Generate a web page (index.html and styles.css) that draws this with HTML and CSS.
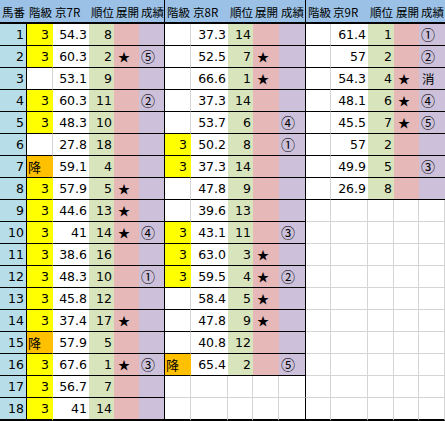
FILE: index.html
```html
<!DOCTYPE html>
<html lang="ja">
<head>
  <meta charset="UTF-8" />
  <title>京 成績表</title>
  <link rel="stylesheet" href="styles.css">
</head>
<body>
  <div class="sheet">
    <!-- header -->
    <div class="row head">
      <span>馬番</span><span>階級</span><span>京7R</span><span>順位</span><span>展開</span><span class="end">成績</span>
      <span>階級</span><span>京8R</span><span>順位</span><span>展開</span><span class="end">成績</span>
      <span>階級</span><span>京9R</span><span>順位</span><span>展開</span><span>成績</span>
    </div>

    <div class="row">
      <span class="no">1</span><span class="cls y">3</span><span class="time">54.3</span><span class="rank">8</span><span class="dev"></span><span class="res end"></span>
      <span class="cls"></span><span class="time">37.3</span><span class="rank">14</span><span class="dev"></span><span class="res end"></span>
      <span class="cls"></span><span class="time">61.4</span><span class="rank">1</span><span class="dev"></span><span class="res">①</span>
    </div>
    <div class="row">
      <span class="no">2</span><span class="cls y">3</span><span class="time">60.3</span><span class="rank">2</span><span class="dev">★</span><span class="res end">⑤</span>
      <span class="cls"></span><span class="time">52.5</span><span class="rank">7</span><span class="dev">★</span><span class="res end"></span>
      <span class="cls"></span><span class="time">57</span><span class="rank">2</span><span class="dev"></span><span class="res">②</span>
    </div>
    <div class="row">
      <span class="no">3</span><span class="cls"></span><span class="time">53.1</span><span class="rank">9</span><span class="dev"></span><span class="res end"></span>
      <span class="cls"></span><span class="time">66.6</span><span class="rank">1</span><span class="dev">★</span><span class="res end"></span>
      <span class="cls"></span><span class="time">54.3</span><span class="rank">4</span><span class="dev">★</span><span class="res kanji">消</span>
    </div>
    <div class="row">
      <span class="no">4</span><span class="cls y">3</span><span class="time">60.3</span><span class="rank">11</span><span class="dev"></span><span class="res end">②</span>
      <span class="cls"></span><span class="time">37.3</span><span class="rank">14</span><span class="dev"></span><span class="res end"></span>
      <span class="cls"></span><span class="time">48.1</span><span class="rank">6</span><span class="dev">★</span><span class="res">④</span>
    </div>
    <div class="row">
      <span class="no">5</span><span class="cls y">3</span><span class="time">48.3</span><span class="rank">10</span><span class="dev"></span><span class="res end"></span>
      <span class="cls"></span><span class="time">53.7</span><span class="rank">6</span><span class="dev"></span><span class="res end">④</span>
      <span class="cls"></span><span class="time">45.5</span><span class="rank">7</span><span class="dev">★</span><span class="res">⑤</span>
    </div>
    <div class="row">
      <span class="no">6</span><span class="cls"></span><span class="time">27.8</span><span class="rank">18</span><span class="dev"></span><span class="res end"></span>
      <span class="cls y">3</span><span class="time">50.2</span><span class="rank">8</span><span class="dev"></span><span class="res end">①</span>
      <span class="cls"></span><span class="time">57</span><span class="rank">2</span><span class="dev"></span><span class="res"></span>
    </div>
    <div class="row">
      <span class="no">7</span><span class="cls o">降</span><span class="time">59.1</span><span class="rank">4</span><span class="dev"></span><span class="res end"></span>
      <span class="cls y">3</span><span class="time">37.3</span><span class="rank">14</span><span class="dev"></span><span class="res end"></span>
      <span class="cls"></span><span class="time">49.9</span><span class="rank">5</span><span class="dev"></span><span class="res">③</span>
    </div>
    <div class="row">
      <span class="no">8</span><span class="cls y">3</span><span class="time">57.9</span><span class="rank">5</span><span class="dev">★</span><span class="res end"></span>
      <span class="cls"></span><span class="time">47.8</span><span class="rank">9</span><span class="dev"></span><span class="res end"></span>
      <span class="cls"></span><span class="time">26.9</span><span class="rank">8</span><span class="dev"></span><span class="res"></span>
    </div>
    <div class="row">
      <span class="no">9</span><span class="cls y">3</span><span class="time">44.6</span><span class="rank">13</span><span class="dev">★</span><span class="res end"></span>
      <span class="cls"></span><span class="time">39.6</span><span class="rank">13</span><span class="dev"></span><span class="res end"></span>
      <span class="empty"></span><span class="empty"></span><span class="empty"></span><span class="empty"></span><span class="empty"></span>
    </div>
    <div class="row">
      <span class="no">10</span><span class="cls y">3</span><span class="time">41</span><span class="rank">14</span><span class="dev">★</span><span class="res end">④</span>
      <span class="cls y">3</span><span class="time">43.1</span><span class="rank">11</span><span class="dev"></span><span class="res end">③</span>
      <span class="empty"></span><span class="empty"></span><span class="empty"></span><span class="empty"></span><span class="empty"></span>
    </div>
    <div class="row">
      <span class="no">11</span><span class="cls y">3</span><span class="time">38.6</span><span class="rank">16</span><span class="dev"></span><span class="res end"></span>
      <span class="cls y">3</span><span class="time">63.0</span><span class="rank">3</span><span class="dev">★</span><span class="res end"></span>
      <span class="empty"></span><span class="empty"></span><span class="empty"></span><span class="empty"></span><span class="empty"></span>
    </div>
    <div class="row">
      <span class="no">12</span><span class="cls y">3</span><span class="time">48.3</span><span class="rank">10</span><span class="dev"></span><span class="res end">①</span>
      <span class="cls y">3</span><span class="time">59.5</span><span class="rank">4</span><span class="dev">★</span><span class="res end">②</span>
      <span class="empty"></span><span class="empty"></span><span class="empty"></span><span class="empty"></span><span class="empty"></span>
    </div>
    <div class="row">
      <span class="no">13</span><span class="cls y">3</span><span class="time">45.8</span><span class="rank">12</span><span class="dev"></span><span class="res end"></span>
      <span class="cls"></span><span class="time">58.4</span><span class="rank">5</span><span class="dev">★</span><span class="res end"></span>
      <span class="empty"></span><span class="empty"></span><span class="empty"></span><span class="empty"></span><span class="empty"></span>
    </div>
    <div class="row">
      <span class="no">14</span><span class="cls y">3</span><span class="time">37.4</span><span class="rank">17</span><span class="dev">★</span><span class="res end"></span>
      <span class="cls"></span><span class="time">47.8</span><span class="rank">9</span><span class="dev">★</span><span class="res end"></span>
      <span class="empty"></span><span class="empty"></span><span class="empty"></span><span class="empty"></span><span class="empty"></span>
    </div>
    <div class="row">
      <span class="no">15</span><span class="cls o">降</span><span class="time">57.9</span><span class="rank">5</span><span class="dev"></span><span class="res end"></span>
      <span class="cls"></span><span class="time">40.8</span><span class="rank">12</span><span class="dev"></span><span class="res end"></span>
      <span class="empty"></span><span class="empty"></span><span class="empty"></span><span class="empty"></span><span class="empty"></span>
    </div>
    <div class="row">
      <span class="no">16</span><span class="cls y">3</span><span class="time">67.6</span><span class="rank">1</span><span class="dev">★</span><span class="res end">③</span>
      <span class="cls o">降</span><span class="time">65.4</span><span class="rank">2</span><span class="dev"></span><span class="res end">⑤</span>
      <span class="empty"></span><span class="empty"></span><span class="empty"></span><span class="empty"></span><span class="empty"></span>
    </div>
    <div class="row">
      <span class="no">17</span><span class="cls y">3</span><span class="time">56.7</span><span class="rank">7</span><span class="dev"></span><span class="res end"></span>
      <span class="empty"></span><span class="empty"></span><span class="empty"></span><span class="empty"></span><span class="empty end"></span>
      <span class="empty"></span><span class="empty"></span><span class="empty"></span><span class="empty"></span><span class="empty"></span>
    </div>
    <div class="row last">
      <span class="no">18</span><span class="cls y">3</span><span class="time">41</span><span class="rank">14</span><span class="dev"></span><span class="res end"></span>
      <span class="empty"></span><span class="empty"></span><span class="empty"></span><span class="empty"></span><span class="empty end"></span>
      <span class="empty"></span><span class="empty"></span><span class="empty"></span><span class="empty"></span><span class="empty"></span>
    </div>
  </div>
</body>
</html>
```

FILE: styles.css
```css
/* Reset */
* {
  margin: 0;
  padding: 0;
  box-sizing: border-box;
}

body {
  background-color: #fff;
  color: #000;
  font-family: 'DejaVu Sans', 'Noto Sans CJK JP', sans-serif;
  font-size: 12.5px;
  overflow: hidden;
}

/* Sheet grid */
.sheet {
  width: 445px;
}

.row {
  display: grid;
  grid-template-columns: 27px 26px 36px 25px 25px 26px 26px 37px 25px 26px 27px 25px 37px 26px 25px 26px;
  height: 22px;
}

.row > span {
  border-bottom: 1px solid #000;
  padding: 0 2px;
  text-align: right;
  line-height: 21px;
  white-space: nowrap;
  overflow: hidden;
}

.row.last {
  height: 23px;
}

.row.last > span {
  border-bottom: 2px solid #000;
}

/* Header */
.row.head {
  height: 24px;
}

.row.head > span {
  background-color: #9bc2e6;
  border-bottom: 2px solid #000;
  font-family: 'Noto Sans CJK JP', sans-serif;
  font-size: 11.5px;
  text-align: left;
  line-height: 22px;
  padding: 1px 0 0 2px;
}

/* Columns */
.no {
  background-color: #b7dee8;
  border-right: 1px solid #000;
}

.cls {
  border-right: 1px solid #d4d4d4;
  padding-right: 3px !important;
}

.cls.y {
  background-color: #ffff00;
  border-right-color: transparent;
}

.cls.o {
  background-color: #ffc000;
  border-right-color: transparent;
  text-align: left !important;
  padding-left: 1px !important;
  font-family: 'Noto Sans CJK JP', sans-serif;
  font-size: 13px;
}

.rank {
  background-color: #d8e4bc;
}

.dev {
  background-color: #e6b8b7;
  text-align: left !important;
  padding-left: 4px !important;
  font-family: 'Noto Sans CJK JP', sans-serif;
  font-size: 12px;
}

.res {
  background-color: #ccc0da;
  text-align: left !important;
  padding-left: 2px !important;
  font-family: 'Noto Sans CJK JP', sans-serif;
  font-size: 14px;
}

.res.kanji {
  font-size: 12.5px;
  padding-left: 3px !important;
}

.empty {
  border-right: 1px solid #d4d4d4;
  border-bottom-color: #d4d4d4 !important;
}

.row.last > .empty {
  border-bottom-color: #000 !important;
}

/* Section separators */
.end,
.empty.end {
  border-right: 1px solid #000;
}
```
